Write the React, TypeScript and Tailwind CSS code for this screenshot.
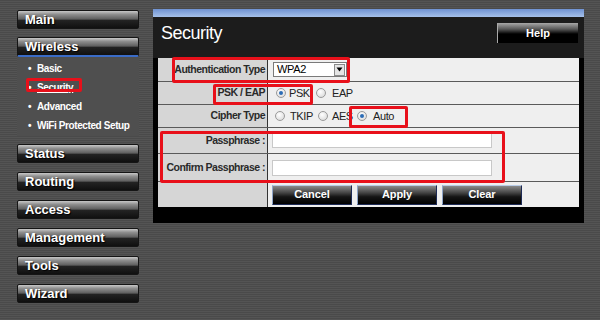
import React from "react";

const FONT = "font-['Liberation_Sans',Arial,sans-serif]";

function NavButton({ label, active }: { label: string; active?: boolean }) {
  return (
    <div
      className={`relative w-[122px] ${active ? "h-[20px] border-b-2 border-b-[#3a6cc8]" : "h-[19px]"} rounded-[2px] border border-[#151515] bg-[linear-gradient(180deg,#c8c8c8_0%,#8e8e8e_20%,#5e5e5e_48%,#232323_54%,#101010_100%)] flex items-center pl-[7px] text-[13px] font-bold text-white leading-none [text-shadow:1px_1px_1px_#000]`}
    >
      {label}
    </div>
  );
}

function Radio({ checked }: { checked?: boolean }) {
  return (
    <span className="relative inline-block w-[10px] h-[10px] shrink-0 rounded-full border border-[#9a9a9a] bg-[radial-gradient(circle_at_40%_35%,#ffffff,#d4d4d4)]">
      {checked && <span className="absolute inset-[2px] rounded-full bg-[#2b6cb5]" />}
    </span>
  );
}

function ActionButton({ label }: { label: string }) {
  return (
    <div className="w-[80px] h-[20px] flex items-center justify-center border border-[#1d2a55] border-t-[#b8cbe6] border-l-[#8ea4c8] bg-[linear-gradient(180deg,#8a8a8a_0%,#4a4a4a_35%,#151515_60%,#000000_100%)] text-white text-[11px] font-bold tracking-[-0.1px]">
      {label}
    </div>
  );
}

function Row({
  label,
  h,
  children,
  last,
}: {
  label: string;
  h: string;
  children?: React.ReactNode;
  last?: boolean;
}) {
  return (
    <div className={`flex ${h} ${last ? "" : "border-b border-[#5a5a5a]"}`}>
      <div className="w-[109px] shrink-0 bg-[#d6d6d6] flex items-center justify-end pr-[2px] text-[10.5px] font-bold text-[#2a2a2a] tracking-[-0.5px]">
        {label}
      </div>
      <div className="w-px bg-[#333]" />
      <div className="flex-1 bg-[#efefef] flex items-center">{children}</div>
    </div>
  );
}

function RedBox({ cls }: { cls: string }) {
  return <div className={`absolute border-[3px] border-[#e8101a] rounded-[2px] ${cls}`} />;
}

export default function App() {
  return (
    <div
      className={`relative w-[600px] h-[320px] overflow-hidden ${FONT} bg-[repeating-linear-gradient(180deg,#4a4a4a_0px,#4a4a4a_1px,#545454_1px,#545454_2px)]`}
    >
      <div className="flex pl-[17px] pt-[9px]">
        {/* Left nav */}
        <div className="w-[122px] flex flex-col pt-[1px]">
          <NavButton label="Main" />
          <div className="mt-[8px]">
            <NavButton label="Wireless" active />
          </div>
          <div className="w-[122px] h-[79px] bg-[#4f4f4f] pt-[2px] pl-[11px] flex flex-col text-[10px] font-bold text-white tracking-[-0.4px]">
            {["Basic", "Security", "Advanced", "WiFi Protected Setup"].map((t) => (
              <div key={t} className="h-[19px] flex items-center">
                <span className="w-[9px]">•</span>
                <span className={t === "Security" ? "underline" : ""}>{t}</span>
              </div>
            ))}
          </div>
          <div className="mt-[8px] flex flex-col gap-[9px]">
            {["Status", "Routing", "Access", "Management", "Tools", "Wizard"].map((t) => (
              <NavButton key={t} label={t} />
            ))}
          </div>
        </div>

        {/* Main panel */}
        <div className="ml-[14px] w-[431px] h-[214px] bg-black flex flex-col">
          <div className="h-[8px] bg-[linear-gradient(180deg,#6f92d2_0%,#a6c1ea_100%)]" />
          <div className="h-[41px] bg-[#1c1c1c] flex items-start justify-between pt-[5px] pl-[8px] pr-[6px]">
            <div className="text-[18px] leading-[22px] text-white tracking-[-0.5px]">Security</div>
            <div className="mt-[1px] w-[81px] h-[20px] flex items-center justify-center border-l border-[#aaa] bg-[linear-gradient(180deg,#a8a8a8_0%,#5a5a5a_30%,#000000_55%,#000000_100%)] text-white text-[11px] font-bold">
              Help
            </div>
          </div>
          <div className="px-[5px]">
            <div className="flex flex-col">
              <Row label="Authentication Type" h="h-[24px]">
                <div className="ml-[5px] w-[74px] h-[15px] border border-[#7a7a7a] bg-white flex items-center justify-between">
                  <span className="pl-[3px] text-[11px] text-black tracking-[-0.3px]">WPA2</span>
                  <span className="w-[11px] h-[12px] mr-[1px] bg-[#e4e4e4] border border-[#8a8a8a] flex items-center justify-center">
                    <svg width="7" height="5" viewBox="0 0 7 5">
                      <path d="M0.5 0.5 H6.5 L3.5 4.5 Z" fill="#000" />
                    </svg>
                  </span>
                </div>
              </Row>
              <Row label="PSK / EAP" h="h-[23px]">
                <div className="pl-[8px] flex items-center text-[11px] text-[#222] tracking-[-0.4px]">
                  <span className="w-[40px] flex items-center gap-[3px]">
                    <Radio checked />
                    <span>PSK</span>
                  </span>
                  <span className="flex items-center gap-[6px]">
                    <Radio />
                    <span>EAP</span>
                  </span>
                </div>
              </Row>
              <Row label="Cipher Type" h="h-[23px]">
                <div className="pl-[7px] flex items-center text-[11px] text-[#222] tracking-[-0.4px]">
                  <span className="w-[43px] flex items-center gap-[5px]">
                    <Radio />
                    <span>TKIP</span>
                  </span>
                  <span className="w-[39px] flex items-center gap-[4px]">
                    <Radio />
                    <span>AES</span>
                  </span>
                  <span className="flex items-center gap-[6px]">
                    <Radio checked />
                    <span>Auto</span>
                  </span>
                </div>
              </Row>
              <Row label="Passphrase :" h="h-[26px]">
                <div className="ml-[4px] w-[220px] h-[15px] border border-[#c8c8c8] bg-white" />
              </Row>
              <Row label="Confirm Passphrase :" h="h-[28px]">
                <div className="ml-[4px] w-[220px] h-[16px] border border-[#c8c8c8] bg-white" />
              </Row>
              <Row label="" h="h-[25px]" last>
                <div className="ml-[4px] flex gap-[5px]">
                  <ActionButton label="Cancel" />
                  <ActionButton label="Apply" />
                  <ActionButton label="Clear" />
                </div>
              </Row>
            </div>
          </div>
        </div>
      </div>

      {/* Red annotation boxes */}
      <RedBox cls="left-[26px] top-[78px] w-[56px] h-[14px]" />
      <RedBox cls="left-[172px] top-[57px] w-[178px] h-[26px]" />
      <RedBox cls="left-[213px] top-[84px] w-[100px] h-[21px]" />
      <RedBox cls="left-[349px] top-[106px] w-[59px] h-[22px]" />
      <RedBox cls="left-[160px] top-[131px] w-[345px] h-[52px]" />
    </div>
  );
}
